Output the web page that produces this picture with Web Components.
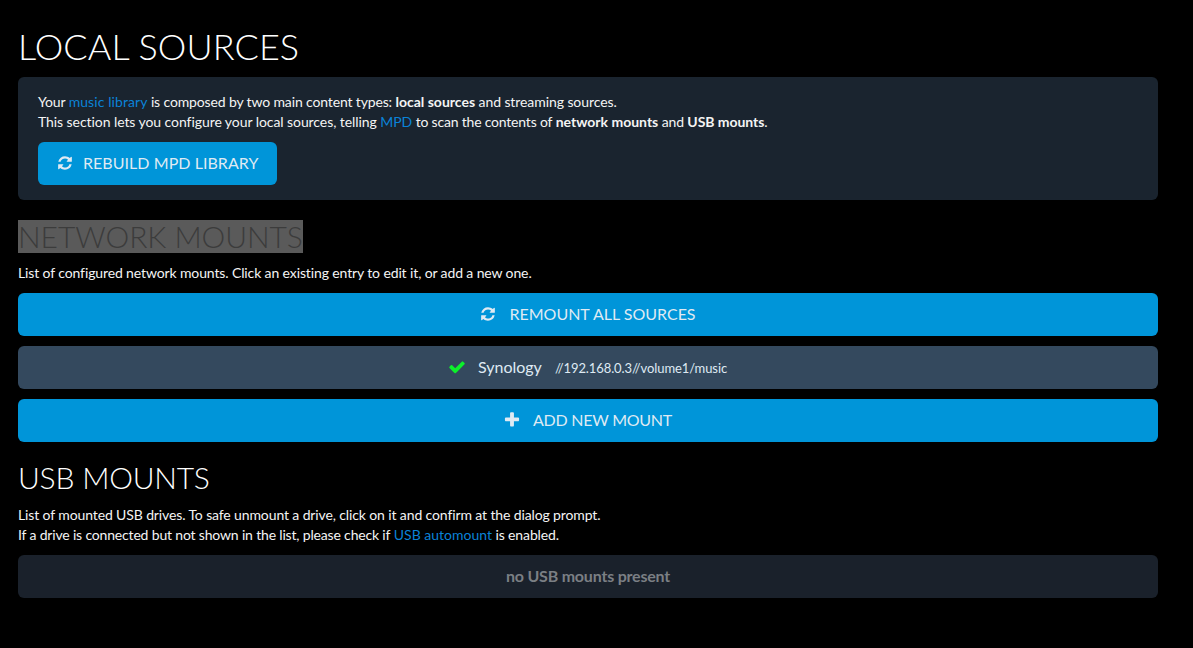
<!DOCTYPE html>
<html>
<head>
<meta charset="utf-8">
<title>Local sources</title>
<style>
    html, body { margin: 0; background: #000; }
    body { font: 14px/20px Lato, sans-serif; color: #f4f4f4; }
</style>
</head>
<body>
<script>
const ICONS = {
    refresh: "M1639 1056q0 5-1 7-64 268-268 434.5t-478 166.5q-146 0-282.5-55t-243.5-157l-129 129q-19 19-45 19t-45-19-19-45v-448q0-26 19-45t45-19h448q26 0 45 19t19 45-19 45l-137 137q71 66 161 102t187 36q134 0 250-65t186-179q11-17 53-117 8-23 30-23h192q13 0 22.5 9.5t9.5 22.5zm25-800v448q0 26-19 45t-45 19h-448q-26 0-45-19t-19-45 19-45l138-138q-148-137-349-137-134 0-250 65t-186 179q-11 17-53 117-8 23-30 23h-199q-13 0-22.5-9.5t-9.5-22.5v-7q65-268 270-434.5t480-166.5q146 0 284 55.5t245 156.5l130-129q19-19 45-19t45 19 19 45z",
    check: "M1671 566q0 40-28 68l-724 724-136 136q-28 28-68 28t-68-28l-136-136-362-362q-28-28-28-68t28-68l136-136q28-28 68-28t68 28l294 295 656-657q28-28 68-28t68 28l136 136q28 28 28 68z",
    plus: "M1600 736v192q0 40-28 68t-68 28h-416v416q0 40-28 68t-68 28h-192q-40 0-68-28t-28-68v-416h-416q-40 0-68-28t-28-68v-192q0-40 28-68t68-28h416v-416q0-40 28-68t68-28h192q40 0 68 28t28 68v416h416q40 0 68 28t28 68z"
};

class MmIcon extends HTMLElement {
    connectedCallback() {
        this.attachShadow({ mode: "open" });
        const d = ICONS[this.getAttribute("name")];
        this.shadowRoot.innerHTML = `
            <style>
                :host { display: inline-flex; width: 16px; height: 16px; color: inherit; }
                svg { width: 100%; height: 100%; fill: currentColor; }
            </style>
            <svg viewBox="0 0 1792 1792"><path d="${d}"/></svg>`;
    }
}

class MmHeading extends HTMLElement {
    constructor() {
        super();
        this.attachShadow({ mode: "open" });
        this.shadowRoot.innerHTML = `
            <style>
                :host { display: block; font-weight: 300; font-size: 30px; line-height: 33px; color: #fff; }
                :host([big]) { font-size: 36px; line-height: 40px; }
                :host([marked]) { color: #3c3c3c; }
                span { display: inline-block; }
                :host([marked]) span { background: #5a5a5a; }
            </style>
            <span><slot></slot></span>`;
    }
}

class MmWell extends HTMLElement {
    constructor() {
        super();
        this.attachShadow({ mode: "open" });
        this.shadowRoot.innerHTML = `
            <style>
                :host { display: block; padding: 15px 20px; background: #1a242f; border-radius: 6px; }
            </style>
            <slot></slot>`;
    }
}

class MmLink extends HTMLElement {
    constructor() {
        super();
        this.attachShadow({ mode: "open" });
        this.shadowRoot.innerHTML = `
            <style>
                :host { display: inline; letter-spacing: 0; }
                a { color: #0a83d8; text-decoration: none; }
            </style>
            <a href="#"><slot></slot></a>`;
    }
}

class MmButton extends HTMLElement {
    constructor() {
        super();
        this.attachShadow({ mode: "open" });
        this.shadowRoot.innerHTML = `
            <style>
                :host {
                    display: flex;
                    align-items: center;
                    justify-content: center;
                    gap: 13px;
                    box-sizing: border-box;
                    height: 43px;
                    padding-bottom: 2px;
                    background: #0095d9;
                    color: #dfeaf3;
                    border-radius: 6px;
                    font-size: 16px;
                }
                :host([inline]) { display: inline-flex; padding: 0 19px 2px; gap: 10px; }
                :host([variant="mount"]) { background: #34495e; }
                :host([variant="empty"]) { background: #1a212b; color: #7b7f84; font-weight: 700; letter-spacing: -0.2px; }
            </style>
            <slot></slot>`;
    }
}

class MmSection extends HTMLElement {
    constructor() {
        super();
        this.attachShadow({ mode: "open" });
        this.shadowRoot.innerHTML = `
            <style>
                :host { display: flex; flex-direction: column; gap: 10px; }
            </style>
            <slot></slot>`;
    }
}

class LocalSources extends HTMLElement {
    constructor() {
        super();
        this.attachShadow({ mode: "open" });
        this.shadowRoot.innerHTML = `
            <style>
                :host { display: block; width: 1140px; padding: 26px 0 0 18px; }
                mm-well { margin-top: 11px; }
                mm-well p { margin: 0 0 10px; letter-spacing: -0.14px; }
                mm-heading.local { letter-spacing: 0.08px; }
                mm-heading.net { margin-top: 20px; letter-spacing: -0.07px; }
                mm-heading.usb { margin-top: 19px; letter-spacing: -0.2px; }
                p.note { margin: 10px 0; letter-spacing: -0.12px; }
                mm-heading.usb + p.note { margin-top: 11px; }
                b { font-weight: 700; letter-spacing: 0; }
                b.fit { letter-spacing: -0.06px; }
                .wide-link { letter-spacing: 0.08px; }
                .soft { letter-spacing: -0.08px; }
                .loose { letter-spacing: -0.07px; }
                .tight { letter-spacing: -0.2px; }
                .usb-line { letter-spacing: -0.17px; }
                .rebuild { letter-spacing: 0.05px; }
                .add { letter-spacing: -0.25px; }
                .path { font-size: 13px; letter-spacing: -0.1px; position: relative; top: 1px; }
                .ok { color: #0cf02a; }
                .big-icon { width: 18px; height: 18px; margin: 0 -1px; }
            </style>
            <mm-heading class="local" big>LOCAL SOURCES</mm-heading>
            <mm-well>
                <p>Your <span class="wide-link"><mm-link style="letter-spacing: inherit">music library</mm-link></span> is composed by two main content types: <b>local sources</b> <span class="soft">and streaming sources.</span><br>
                <span class="loose">This section lets you configure your local sources, telling</span> <mm-link>MPD</mm-link> <span class="tight">to scan the contents of</span> <b>network mounts</b> and <b class="fit">USB mounts</b>.</p>
                <mm-button inline><mm-icon name="refresh"></mm-icon><span class="rebuild">REBUILD MPD LIBRARY</span></mm-button>
            </mm-well>
            <mm-heading class="net" marked>NETWORK MOUNTS</mm-heading>
            <p class="note">List of configured network mounts. Click an existing entry to edit it, or add a new one.</p>
            <mm-section>
                <mm-button><mm-icon name="refresh"></mm-icon>REMOUNT ALL SOURCES</mm-button>
                <mm-button variant="mount"><mm-icon class="ok big-icon" name="check"></mm-icon><span>Synology</span><span class="path">//192.168.0.3//volume1/music</span></mm-button>
                <mm-button><mm-icon class="big-icon" name="plus"></mm-icon><span class="add">ADD NEW MOUNT</span></mm-button>
            </mm-section>
            <mm-heading class="usb">USB MOUNTS</mm-heading>
            <p class="note">List of mounted USB drives. To safe unmount a drive, click on it and confirm at the dialog prompt.<br>
            <span class="usb-line">If a drive is connected but not shown in the list, please check if</span> <mm-link>USB automount</mm-link> is enabled.</p>
            <mm-button variant="empty">no USB mounts present</mm-button>`;
    }
}

customElements.define("mm-icon", MmIcon);
customElements.define("mm-heading", MmHeading);
customElements.define("mm-well", MmWell);
customElements.define("mm-link", MmLink);
customElements.define("mm-button", MmButton);
customElements.define("mm-section", MmSection);
customElements.define("local-sources", LocalSources);

document.body.appendChild(document.createElement("local-sources"));
</script>
</body>
</html>
